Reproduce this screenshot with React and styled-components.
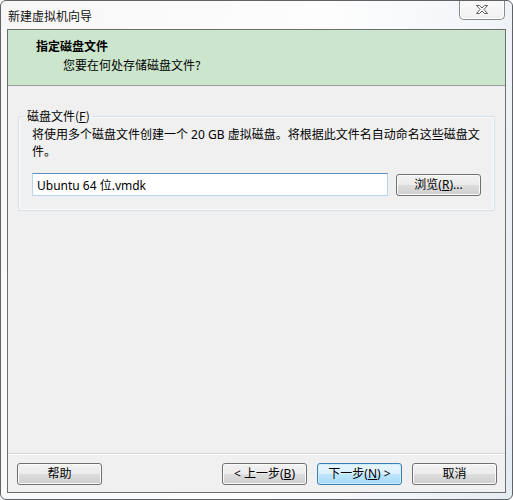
import React, { useState } from 'react'
import styled, { createGlobalStyle } from 'styled-components'

const GlobalStyle = createGlobalStyle`
  html, body {
    margin: 0;
    padding: 0;
    background: #fff;
  }
  body {
    font-family: "Segoe UI", "Noto Sans", "Noto Sans CJK SC", sans-serif;
    font-size: 12px;
    color: #000;
  }
`

const Frame = styled.div`
  width: 513px;
  height: 500px;
  box-sizing: border-box;
  border: 1px solid #5f6368;
  border-radius: 6px;
  padding: 0 6px 6px;
  display: flex;
  flex-direction: column;
  background: linear-gradient(100deg, #f7f7f7 0%, #fdfdfd 55%, #f3f6f9 80%, #e4ecf3 100%);
  overflow: hidden;
`

const TitleBar = styled.div`
  height: 28px;
  display: flex;
  align-items: flex-start;
  justify-content: space-between;
  padding-left: 1px;
`

const Caption = styled.span`
  line-height: 16px;
  margin-top: 7px;
  font-family: "Noto Sans CJK SC", sans-serif;
  color: #111;
`

const CloseButton = styled.button`
  width: 46px;
  height: 20px;
  margin: -1px 1px 0 0;
  padding: 0;
  box-sizing: border-box;
  border: 1px solid #8b8b8b;
  border-top: none;
  border-radius: 0 0 5px 5px;
  background: linear-gradient(#fafafa, #f0f0f0);
  box-shadow: inset 0 0 0 1px #ffffff;
  display: flex;
  align-items: center;
  justify-content: center;
`

const Client = styled.div`
  flex: 1;
  display: flex;
  flex-direction: column;
  border: 1px solid #6d6d6d;
  background: #f0f0f0;
`

const Header = styled.div`
  height: 56px;
  box-sizing: border-box;
  padding: 8px 0 0 28px;
  background: #cbe6cc;
  border-bottom: 1px solid #a0a0a0;
  font-family: "Noto Sans CJK SC", sans-serif;
`

const HeaderTitle = styled.div`
  font-weight: bold;
  line-height: 16px;
`

const HeaderSub = styled.div`
  line-height: 16px;
  margin: 3px 0 0 27px;
`

const Content = styled.div`
  flex: 1;
  padding: 22px 10px 0;
`

const Group = styled.fieldset`
  margin: 0;
  min-width: 0;
  padding: 2px 13px 14px;
  border: 1px solid #d5dfe5;
  border-radius: 3px;
  box-shadow: inset 0 0 0 1px #fbfbfb;
`

const Legend = styled.legend`
  margin-left: -7px;
  padding: 0 2px;
  line-height: 16px;
  font-family: "Noto Sans CJK SC", sans-serif;
`

const Description = styled.p`
  margin: 0 -4px 0 0;
  line-height: 17px;
  font-family: "Noto Sans", "Noto Sans CJK SC", sans-serif;
`

const FileRow = styled.div`
  margin-top: 13px;
  display: flex;
  align-items: center;
  gap: 8px;
`

const TextBox = styled.input`
  flex: 1;
  min-width: 0;
  height: 23px;
  box-sizing: border-box;
  padding: 0 4px;
  border: 1px solid #b7d6ea;
  border-top-color: #5a8fbd;
  background: #fff;
  font: inherit;
  font-family: "Noto Sans", "Noto Sans CJK SC", sans-serif;
  outline: none;
`

const Button = styled.button`
  width: 85px;
  height: 22px;
  flex-shrink: 0;
  box-sizing: border-box;
  padding: 0;
  border: 1px solid ${({ $default }) => ($default ? '#3c7fb1' : '#707070')};
  border-radius: 3px;
  background: ${({ $default }) =>
    $default
      ? 'linear-gradient(#eaf6fd 0%, #d9f0fc 50%, #bee6fd 50%, #a7d9f5 100%)'
      : 'linear-gradient(#f2f2f2 0%, #ebebeb 50%, #dddddd 50%, #cfcfcf 100%)'};
  box-shadow: inset 0 0 0 1px ${({ $default }) => ($default ? '#cdeeff' : '#fbfbfb')};
  font: inherit;
  font-family: "Noto Sans", "Noto Sans CJK SC", sans-serif;
  line-height: 18px;
  color: #000;
`

const Key = styled.span`
  text-decoration: underline;
`

const Footer = styled.div`
  display: flex;
  align-items: center;
  gap: 10px;
  padding: 9px 8px 7px 9px;
  border-top: 1px solid #d5d5d5;
  box-shadow: inset 0 1px 0 #fdfdfd;
`

const Spacer = styled.div`
  flex: 1;
`

function CloseIcon() {
  return (
    <svg width="14" height="11" viewBox="0 0 14 11">
      <path
        d="M1.5 1.5 H4.5 L7 4 L9.5 1.5 H12.5 L9 5.5 L12.5 9.5 H9.5 L7 7 L4.5 9.5 H1.5 L5 5.5 Z"
        fill="#fdfdfd"
        stroke="#5c5c5c"
        strokeWidth="1"
        strokeLinejoin="round"
      />
    </svg>
  )
}

export default function App() {
  const [fileName, setFileName] = useState('Ubuntu 64 位.vmdk')

  return (
    <>
      <GlobalStyle />
      <Frame>
        <TitleBar>
          <Caption>新建虚拟机向导</Caption>
          <CloseButton aria-label="关闭">
            <CloseIcon />
          </CloseButton>
        </TitleBar>

        <Client>
          <Header>
            <HeaderTitle>指定磁盘文件</HeaderTitle>
            <HeaderSub>您要在何处存储磁盘文件?</HeaderSub>
          </Header>

          <Content>
            <Group>
              <Legend>磁盘文件(<Key>F</Key>)</Legend>
              <Description>
                将使用多个磁盘文件创建一个 20 GB 虚拟磁盘。将根据此文件名自动命名这些磁盘文件。
              </Description>
              <FileRow>
                <TextBox value={fileName} onChange={(e) => setFileName(e.target.value)} />
                <Button>浏览(<Key>R</Key>)...</Button>
              </FileRow>
            </Group>
          </Content>

          <Footer>
            <Button>帮助</Button>
            <Spacer />
            <Button>&lt; 上一步(<Key>B</Key>)</Button>
            <Button $default>下一步(<Key>N</Key>) &gt;</Button>
            <Button>取消</Button>
          </Footer>
        </Client>
      </Frame>
    </>
  )
}
